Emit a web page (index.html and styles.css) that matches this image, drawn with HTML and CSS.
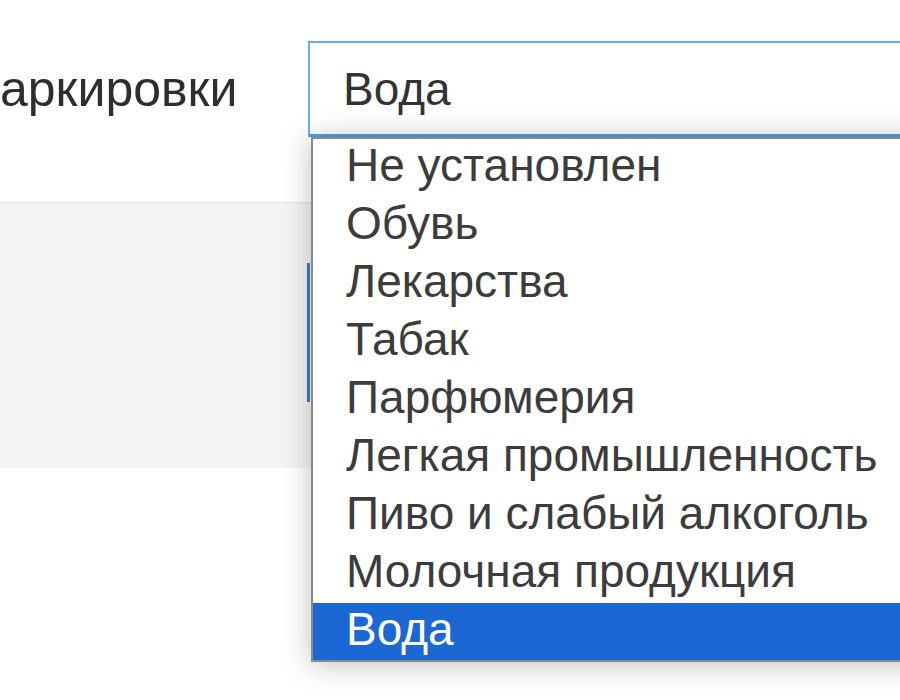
FILE: index.html
```html
<!DOCTYPE html>
<html lang="ru">
<head>
<meta charset="utf-8">
<link rel="stylesheet" href="styles.css">
</head>
<body>
<div class="page">
  <div class="form-row">
    <div class="label">аркировки</div>
    <div class="select-wrap">
      <div class="select">Вода</div>
      <ul class="options">
        <li>Не установлен</li>
        <li>Обувь</li>
        <li>Лекарства</li>
        <li>Табак</li>
        <li>Парфюмерия</li>
        <li>Легкая промышленность</li>
        <li>Пиво и слабый алкоголь</li>
        <li>Молочная продукция</li>
        <li class="selected">Вода</li>
      </ul>
    </div>
  </div>
  <div class="panel">
    <div class="panel-field"></div>
  </div>
</div>
</body>
</html>
```

FILE: styles.css
```css
html, body {
  margin: 0;
  padding: 0;
  background: #fff;
  overflow: hidden;
}
.page {
  width: 900px;
  height: 700px;
  overflow: hidden;
  font-family: "Liberation Sans", Arial, sans-serif;
  color: #333;
}
.form-row {
  display: flex;
  align-items: flex-start;
  height: 202px;
  padding-top: 41px;
  box-sizing: border-box;
}
.label {
  width: 308px;
  flex: none;
  font-size: 50px;
  line-height: 96px;
  white-space: nowrap;
  color: #2e2e2e;
}
.select-wrap {
  position: relative;
  flex: none;
  width: 700px;
}
.select {
  height: 96px;
  box-sizing: border-box;
  border: 2px solid #62b0f4;
  border-bottom: 3px solid #4aa0ec;
  font-size: 46px;
  line-height: 92px;
  padding-left: 33px;
  background: #fff;
  color: #333;
}
.options {
  position: absolute;
  z-index: 2;
  top: 96px;
  left: 3px;
  width: 680px;
  margin: 0;
  padding: 0;
  list-style: none;
  background: #fff;
  border: 2px solid #8a8a8a;
  box-shadow: 0 2px 28px rgba(0, 0, 0, 0.26);
}
.options li {
  font-size: 46px;
  line-height: 52px;
  height: 52px;
  padding-bottom: 6px;
  padding-left: 33px;
  white-space: nowrap;
  color: #3c3c3c;
}
.options li.selected {
  height: 52px;
  line-height: 52px;
  padding-bottom: 5px;
  background: #1b67d4;
  color: #fff;
}
.panel {
  height: 265px;
  background: #f4f4f4;
  border-top: 1px solid #e4e4e4;
  display: flex;
  flex-direction: column;
}
.panel-field {
  margin-top: 60px;
  margin-left: 307px;
  height: 139px;
  border-left: 3px solid #3b80ba;
  background: #fff;
}
```
